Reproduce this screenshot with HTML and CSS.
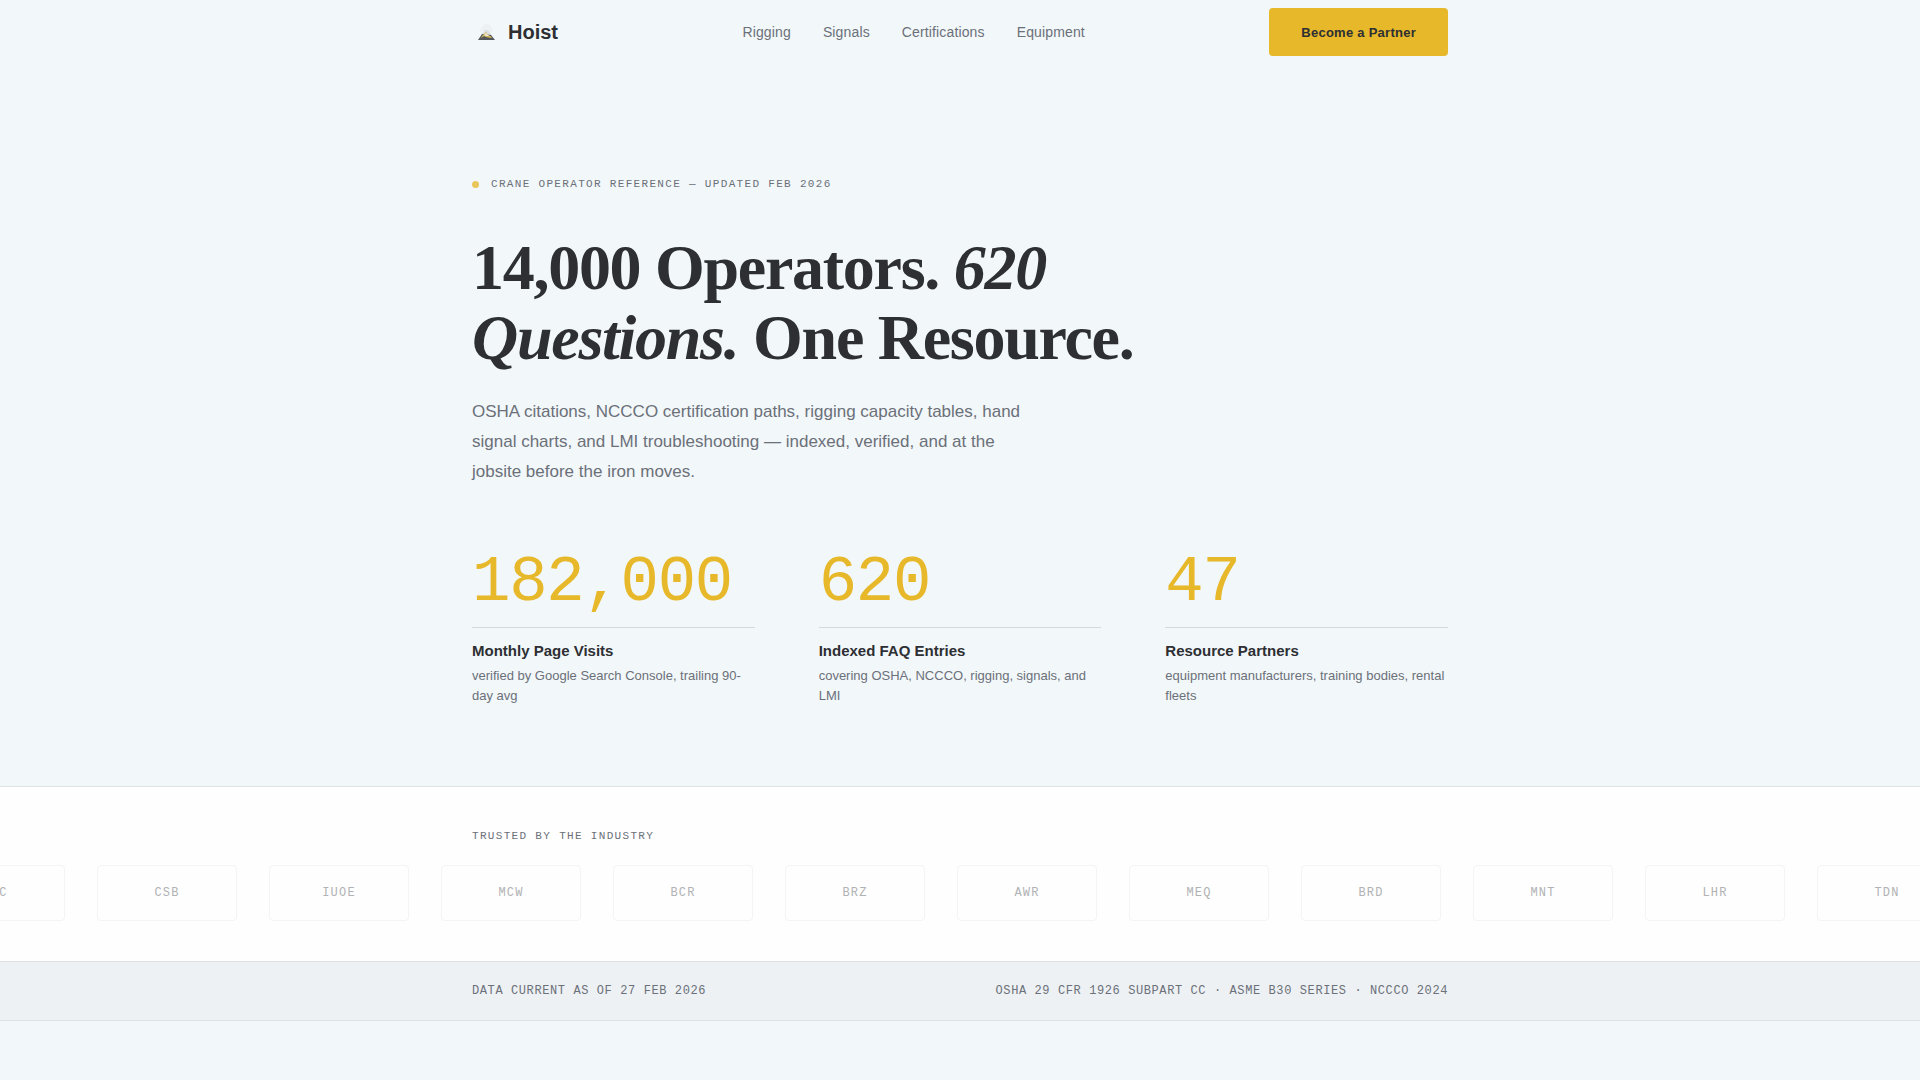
FILE: index.html
```html
<!DOCTYPE html>
<html lang="en">
<head>
    <meta charset="UTF-8">
    <meta name="viewport" content="width=device-width, initial-scale=1.0">
    <title>Hoist</title>
    <link rel="stylesheet" href="styles.css">
</head>
<body>
    <header class="container header">
        <a class="logo" href="#">
            <svg width="28" height="28" viewBox="0 0 28 28" aria-hidden="true">
                <path d="M8 12 L13 5 L18 7 L21 13 L18 17 L10 17 Z" fill="#eef1f3"/>
                <path d="M10 17 L13 12 L16 12 L20 18 Z" fill="#dcdfe0"/>
                <path d="M6 22 L10 16 L19 17 L23 22 Z" fill="#55585a"/>
                <path d="M10 18 L14 14 L16 17 L20 19 L19 20 L14 19 L12 18 L9 20 Z" fill="#d6b65a"/>
                <path d="M12 17 L14 15 L17 18 L14 18 Z" fill="#e9e4d4"/>
            </svg>
            <span>Hoist</span>
        </a>
        <nav class="nav">
            <a href="#">Rigging</a>
            <a href="#">Signals</a>
            <a href="#">Certifications</a>
            <a href="#">Equipment</a>
        </nav>
        <button class="cta" type="button">Become a Partner</button>
    </header>

    <main>
        <section class="container hero">
            <p class="eyebrow"><span class="dot"></span>CRANE OPERATOR REFERENCE — UPDATED FEB 2026</p>
            <h1>14,000 Operators. <em>620 Questions.</em> One Resource.</h1>
            <p class="lead">OSHA citations, NCCCO certification paths, rigging capacity tables, hand signal charts, and LMI troubleshooting — indexed, verified, and at the jobsite before the iron moves.</p>
            <div class="stats">
                <div class="stat">
                    <div class="number">182,000</div>
                    <h2>Monthly Page Visits</h2>
                    <p>verified by Google Search Console, trailing 90-day avg</p>
                </div>
                <div class="stat">
                    <div class="number">620</div>
                    <h2>Indexed FAQ Entries</h2>
                    <p>covering OSHA, NCCCO, rigging, signals, and LMI</p>
                </div>
                <div class="stat">
                    <div class="number">47</div>
                    <h2>Resource Partners</h2>
                    <p>equipment manufacturers, training bodies, rental fleets</p>
                </div>
            </div>
        </section>

        <section class="trusted">
            <p class="container trusted-label">TRUSTED BY THE INDUSTRY</p>
            <div class="track">
                <div class="chip">NCC</div>
                <div class="chip">CSB</div>
                <div class="chip">IUOE</div>
                <div class="chip">MCW</div>
                <div class="chip">BCR</div>
                <div class="chip">BRZ</div>
                <div class="chip">AWR</div>
                <div class="chip">MEQ</div>
                <div class="chip">BRD</div>
                <div class="chip">MNT</div>
                <div class="chip">LHR</div>
                <div class="chip">TDN</div>
            </div>
        </section>
    </main>

    <footer class="footer">
        <div class="container footer-row">
            <span>DATA CURRENT AS OF 27 FEB 2026</span>
            <span>OSHA 29 CFR 1926 SUBPART CC · ASME B30 SERIES · NCCCO 2024</span>
        </div>
    </footer>
</body>
</html>
```
FILE: styles.css
```css
* {
    box-sizing: border-box;
    margin: 0;
    padding: 0;
}
body {
    font-family: "Liberation Sans", Arial, sans-serif;
    background-color: #f2f7fa;
    color: #2d2f33;
}
a {
    color: inherit;
    text-decoration: none;
}
.container {
    width: 100%;
    max-width: 1040px;
    margin: 0 auto;
    padding: 0 32px;
}
.header {
    display: flex;
    align-items: center;
    justify-content: space-between;
    height: 64px;
}
.logo {
    display: flex;
    align-items: center;
    gap: 8px;
    font-size: 20px;
    font-weight: bold;
}
.nav {
    display: flex;
    gap: 32px;
    font-size: 14px;
    letter-spacing: 0.01em;
    color: #6b7079;
}
.cta {
    height: 48px;
    padding: 0 32px;
    border: none;
    border-radius: 4px;
    background-color: #e6b82a;
    color: #2d2f33;
    font-family: inherit;
    font-size: 13px;
    font-weight: bold;
    letter-spacing: 0.02em;
    cursor: pointer;
}
.hero {
    padding-top: 112px;
    padding-bottom: 80px;
}
.eyebrow {
    display: flex;
    align-items: center;
    gap: 12px;
    margin-bottom: 40px;
    font-family: "Liberation Mono", "Courier New", monospace;
    font-size: 11px;
    line-height: 17px;
    letter-spacing: 0.12em;
    color: #6b7079;
}
.dot {
    width: 7px;
    height: 7px;
    border-radius: 50%;
    background-color: #e9c55a;
}
h1 {
    max-width: 720px;
    margin-bottom: 24px;
    font-family: "Liberation Serif", "Times New Roman", serif;
    font-size: 64px;
    line-height: 70px;
    letter-spacing: -0.02em;
}
.lead {
    max-width: 560px;
    margin-bottom: 64px;
    font-size: 17px;
    line-height: 30px;
    color: #6b7079;
}
.stats {
    display: grid;
    grid-template-columns: repeat(3, 1fr);
    gap: 64px;
}
.number {
    padding-bottom: 12px;
    margin-bottom: 12px;
    border-bottom: 1px solid #d5d9dd;
    font-family: "Liberation Mono", "Courier New", monospace;
    font-size: 64px;
    line-height: 64px;
    letter-spacing: -0.02em;
    color: #e6b82a;
}
h2 {
    margin-bottom: 4px;
    font-size: 15px;
    line-height: 22px;
}
.stat p {
    font-size: 13px;
    line-height: 20px;
    color: #6b7079;
}
.trusted {
    padding: 40px 0;
    overflow: hidden;
    border-top: 1px solid #dfe2e4;
    border-bottom: 1px solid #dfe2e4;
    background-color: #fefefe;
}
.trusted-label {
    margin-bottom: 20px;
    font-family: "Liberation Mono", "Courier New", monospace;
    font-size: 11px;
    line-height: 18px;
    letter-spacing: 0.12em;
    color: #6b7079;
}
/* strip runs off both sides of the window */
.track {
    display: flex;
    gap: 32px;
    margin-left: -75px;
}
.chip {
    display: flex;
    flex: none;
    align-items: center;
    justify-content: center;
    width: 140px;
    height: 56px;
    border: 1px solid #f3f4f5;
    border-radius: 4px;
    font-family: "Liberation Mono", "Courier New", monospace;
    font-size: 12px;
    letter-spacing: 0.1em;
    color: #b0b2b4;
}
.footer {
    padding: 20px 0;
    border-bottom: 1px solid #dfe2e4;
    background-color: #edf1f4;
}
.footer-row {
    display: flex;
    justify-content: space-between;
    font-family: "Liberation Mono", "Courier New", monospace;
    font-size: 12px;
    line-height: 18px;
    letter-spacing: 0.05em;
    color: #6b7079;
}
```
